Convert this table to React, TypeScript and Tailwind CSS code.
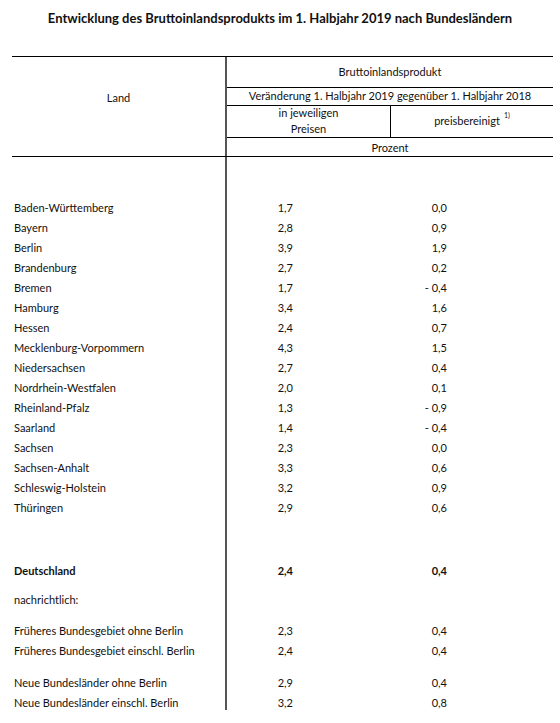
const rows: [string, string, string][] = [
  ["Baden-Württemberg", "1,7", "0,0"],
  ["Bayern", "2,8", "0,9"],
  ["Berlin", "3,9", "1,9"],
  ["Brandenburg", "2,7", "0,2"],
  ["Bremen", "1,7", "- 0,4"],
  ["Hamburg", "3,4", "1,6"],
  ["Hessen", "2,4", "0,7"],
  ["Mecklenburg-Vorpommern", "4,3", "1,5"],
  ["Niedersachsen", "2,7", "0,4"],
  ["Nordrhein-Westfalen", "2,0", "0,1"],
  ["Rheinland-Pfalz", "1,3", "- 0,9"],
  ["Saarland", "1,4", "- 0,4"],
  ["Sachsen", "2,3", "0,0"],
  ["Sachsen-Anhalt", "3,3", "0,6"],
  ["Schleswig-Holstein", "3,2", "0,9"],
  ["Thüringen", "2,9", "0,6"],
];

function Row({
  label,
  a,
  b,
  bold,
  last,
}: {
  label: string;
  a?: string;
  b?: string;
  bold?: boolean;
  last?: boolean;
}) {
  return (
    <div className={`flex ${last ? "h-[17px] items-start" : "h-5 items-center"} ${bold ? "font-bold" : ""}`}>
      <div
        className={`w-[215px] h-full flex pl-[2px] border-r-2 border-[#555] ${
          last ? "items-start pt-[2px]" : "items-center"
        }`}
      >
        {label}
      </div>
      <div className={`w-[164px] h-full flex justify-end pr-[98px] ${last ? "pt-[2px]" : "items-center"}`}>
        {a}
      </div>
      <div className={`w-[162px] h-full flex justify-end pr-[106px] ${last ? "pt-[2px]" : "items-center"}`}>
        {b}
      </div>
    </div>
  );
}

function Gap({ h }: { h: string }) {
  return (
    <div className="flex">
      <div className={`w-[215px] border-r-2 border-[#555] ${h}`} />
    </div>
  );
}

export default function App() {
  return (
    <div
      className="w-[560px] h-[723px] bg-white text-[11px] text-[#111]"
      style={{ fontFamily: "Lato, sans-serif" }}
    >
      <h1 className="pt-[9px] h-[56px] text-center font-bold text-[13px]">
        Entwicklung des Bruttoinlandsprodukts im 1. Halbjahr 2019 nach Bundesländern
      </h1>
      <div className="ml-3 w-[541px]">
        <div className="flex border-t-[1.5px] border-b-[1.5px] border-black h-[101px]">
          <div className="w-[215px] flex items-center justify-center pb-[16px] border-r-2 border-[#555]">
            Land
          </div>
          <div className="flex-1 flex flex-col">
            <div className="h-[32px] flex items-center justify-center border-b border-black">
              Bruttoinlandsprodukt
            </div>
            <div className="h-[18px] flex items-center justify-center border-b border-black">
              Veränderung 1. Halbjahr 2019 gegenüber 1. Halbjahr 2018
            </div>
            <div className="h-[32px] flex border-b border-black">
              <div className="w-[164px] flex flex-col items-center justify-center leading-[16px] border-r border-black">
                <span>in jeweiligen</span>
                <span>Preisen</span>
              </div>
              <div className="flex-1 flex items-center justify-center">
                preisbereinigt
                <sup className="text-[7px] ml-1 -mt-[6px]">1)</sup>
              </div>
            </div>
            <div className="flex-1 flex items-center justify-center pt-[2px]">Prozent</div>
          </div>
        </div>
        <Gap h="h-[41px]" />
        {rows.map(([l, a, b]) => (
          <Row key={l} label={l} a={a} b={b} />
        ))}
        <Gap h="h-[43px]" />
        <Row label="Deutschland" a="2,4" b="0,4" bold />
        <Gap h="h-[9px]" />
        <Row label="nachrichtlich:" />
        <Gap h="h-[11px]" />
        <Row label="Früheres Bundesgebiet ohne Berlin" a="2,3" b="0,4" />
        <Row label="Früheres Bundesgebiet einschl. Berlin" a="2,4" b="0,4" />
        <Gap h="h-[12px]" />
        <Row label="Neue Bundesländer ohne Berlin" a="2,9" b="0,4" />
        <Row label="Neue Bundesländer einschl. Berlin" a="3,2" b="0,8" last />
      </div>
    </div>
  );
}
